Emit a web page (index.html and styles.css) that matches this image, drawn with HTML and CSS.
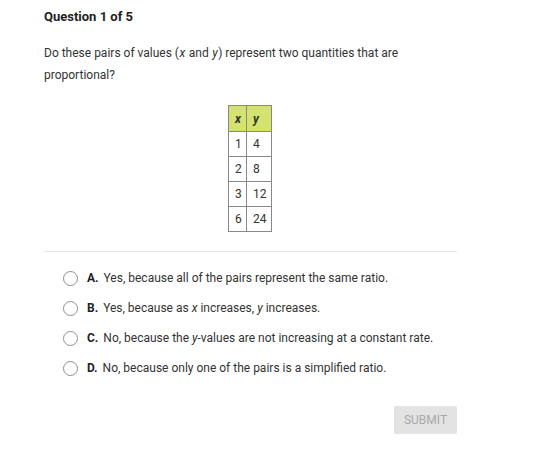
FILE: index.html
```html
<!DOCTYPE html>
<html>
<head>
<meta charset="utf-8">
<link rel="stylesheet" href="styles.css">
</head>
<body>
<div class="page">
  <h1 class="title">Question 1 of 5</h1>
  <p class="prompt"><span>Do these pairs of values (</span><i class="var">x</i><span> and </span><i class="var">y</i><span>) represent two quantities that are</span> <span>proportional?</span></p>
  <div class="table-wrap">
    <table class="data">
      <tr class="head"><th><i>x</i></th><th><i>y</i></th></tr>
      <tr><td>1</td><td>4</td></tr>
      <tr><td>2</td><td>8</td></tr>
      <tr><td>3</td><td>12</td></tr>
      <tr><td>6</td><td>24</td></tr>
    </table>
  </div>
  <hr class="divider">
  <ul class="options">
    <li class="option"><span class="radio"></span><b>A.</b><span>Yes, because all of the pairs represent the same ratio.</span></li>
    <li class="option"><span class="radio"></span><b>B.</b><span>Yes, because as <i>x</i> increases, <i>y</i> increases.</span></li>
    <li class="option"><span class="radio"></span><b>C.</b><span>No, because the <i>y</i>-values are not increasing at a constant rate.</span></li>
    <li class="option"><span class="radio"></span><b>D.</b><span>No, because only one of the pairs is a simplified ratio.</span></li>
  </ul>
  <div class="actions"><button class="submit">SUBMIT</button></div>
</div>
</body>
</html>
```
FILE: styles.css
```css
* { box-sizing: border-box; }
html, body { margin: 0; padding: 0; background: #fff; }
body { font-family: Roboto, "Noto Sans", sans-serif; color: #333; }
.page { width: 413px; margin-left: 44px; padding-top: 9px; }
.title { margin: 0; font-size: 13px; font-weight: 700; color: #222; line-height: 16px; }
.prompt { margin: 17px 0 0; font-size: 12px; line-height: 22px; color: #333; }
.var { display: inline-block; margin: 0 0.5px; }
.table-wrap { display: flex; padding-left: 184px; margin-top: 19px; }
.data { border-collapse: collapse; font-size: 12px; color: #333; }
.data th, .data td { border: 1px solid #888; height: 25px; padding: 0 0 0 6px; text-align: left; font-weight: 400; }
.data th:first-child, .data td:first-child { width: 18px; }
.data th:last-child, .data td:last-child { width: 25px; }
.data th { background: #d4e36d; font-weight: 700; height: 26px; }
.divider { border: 0; border-top: 1px solid #e5e5e5; margin: 19px 0 0; }
.options { list-style: none; margin: 11px 0 0; padding: 0 0 0 19px; }
.option { display: flex; align-items: center; height: 30px; font-size: 12px; color: #333; }
.option b { font-weight: 700; margin-right: 5px; color: #222; }
.radio { width: 15px; height: 15px; border: 1px solid #8f8f8f; border-radius: 50%; margin-right: 9px; flex: none; }
.actions { display: flex; justify-content: flex-end; margin-top: 23px; }
.submit { width: 63px; height: 28px; border: 0; border-radius: 2px; background: #e3e3e3; color: #a8a8a8; font-family: Roboto, sans-serif; font-size: 12px; padding: 0; }
```
